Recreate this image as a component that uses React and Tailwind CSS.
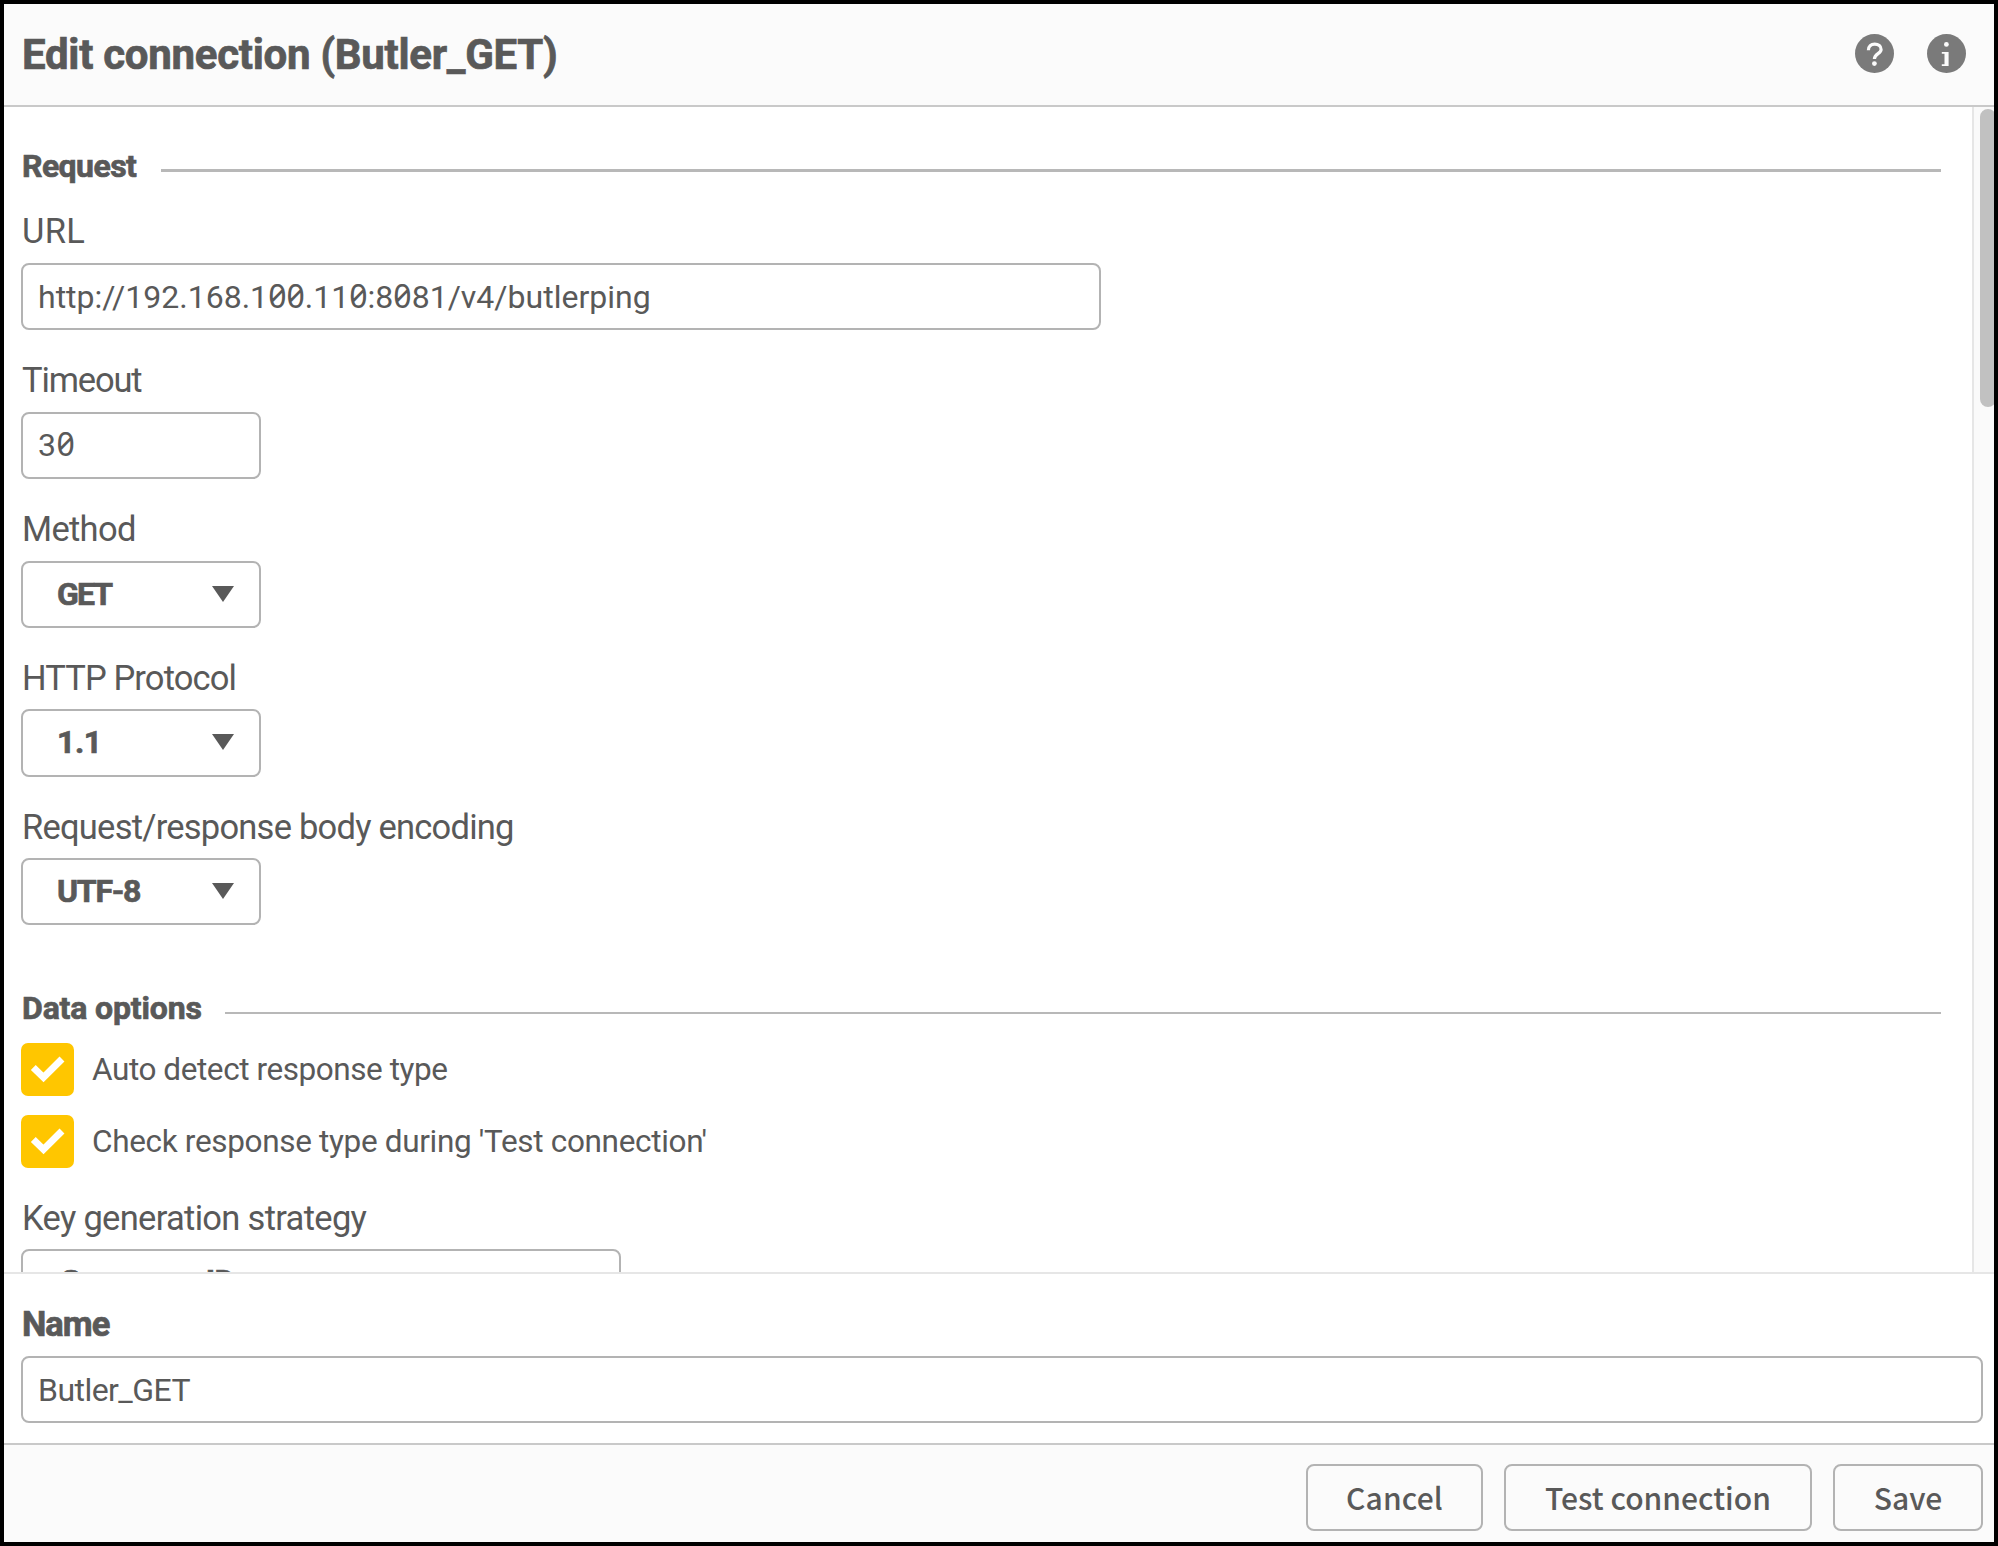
import React from "react";

const box = "box-border rounded-lg border-2 border-[#b3b3b3] bg-white";
const heavy = "font-bold [-webkit-text-stroke:0.7px_#595959]";

function SectionHeading({ children, className, textClass, ruleClass }) {
  return (
    <div className={`flex h-10 w-[1920px] items-center ${className}`}>
      <h2 className={`shrink-0 pl-px text-[32px] leading-10 whitespace-nowrap ${heavy} ${textClass}`}>{children}</h2>
      <div className={`flex-1 bg-[#b8b8b8] ${ruleClass}`} />
    </div>
  );
}

function Label({ children, className }) {
  return <label className={`block h-11 pl-px text-[34.5px] leading-[44px] whitespace-nowrap ${className}`}>{children}</label>;
}

// A zero with a slash through it, in line with the digits round it.
function Zero() {
  return <span className="font-['Noto_Sans'] slashed-zero">0</span>;
}

function TextBox({ children, className }) {
  return (
    <div className={`${box} flex h-[67px] items-center pl-[15px] text-[32px] leading-[40px] whitespace-nowrap ${className}`}>
      <span>{children}</span>
    </div>
  );
}

function Select({ children, className, textClass }) {
  return (
    <button type="button" className={`${box} flex items-center justify-between pr-[25px] pb-0.5 pl-[34px] ${className}`}>
      <span className={`text-[32px] leading-[40px] whitespace-nowrap ${heavy} ${textClass}`}>{children}</span>
      <svg className="h-4 w-[22px] shrink-0" viewBox="0 0 22 16" fill="#595959">
        <path d="M0 0H22L11 16Z" />
      </svg>
    </button>
  );
}

function Checkbox({ children, className, textClass }) {
  return (
    <div className={`flex h-[53px] items-center ${className}`}>
      <span className="flex size-[53px] shrink-0 rounded-[7px] bg-[#ffc600]">
        <svg className="size-[53px]" viewBox="0 0 53 53" fill="none" stroke="#fff" strokeWidth="7">
          <path d="M12.3 24.6L22.5 34.4L41 16" />
        </svg>
      </span>
      <span className={`ml-[18px] text-[31.5px] leading-[40px] whitespace-nowrap ${textClass}`}>{children}</span>
    </div>
  );
}

function FooterButton({ children, className }) {
  return (
    <button
      type="button"
      className={`flex h-[67px] items-center justify-center rounded-lg border-2 border-[#b3b3b3] bg-[#fbfbfb] pb-px font-['Noto_Sans_CJK_JP',sans-serif] text-[30px] leading-[40px] font-medium whitespace-nowrap ${className}`}
    >
      {children}
    </button>
  );
}

export default function App() {
  return (
    <div className="flex h-[1546px] w-[1998px] flex-col overflow-hidden border-4 border-black bg-white font-[Roboto,sans-serif] text-[#595959]">
      <header className="flex h-[103px] shrink-0 items-center justify-between border-b-2 border-[#c9c9c9] bg-[#fbfbfb] pr-7 pb-0.5 pl-[18px]">
        <h1 className={`pt-0.5 text-[42px] leading-[50px] tracking-[-0.28px] whitespace-nowrap ${heavy}`}>Edit connection (Butler_GET)</h1>
        <div className="flex gap-[33px]">
          <svg className="size-[39px]" viewBox="0 0 39 39">
            <circle cx="19.5" cy="19.5" r="19.5" fill="#7a7a7a" />
            <path
              d="M13.4 16.2C13.4 12.2 16 10.1 19.7 10.1C23.5 10.1 26.1 12.2 26.1 15.4C26.1 19.6 19.4 19.8 19.4 25"
              fill="none"
              stroke="#fbfbfb"
              strokeWidth="3.2"
            />
            <circle cx="19.4" cy="29.6" r="2.4" fill="#fbfbfb" />
          </svg>
          <svg className="size-[39px]" viewBox="0 0 39 39">
            <circle cx="19.5" cy="19.5" r="19.5" fill="#7a7a7a" />
            <circle cx="19.4" cy="10.4" r="2.4" fill="#fbfbfb" />
            <path d="M14.8 18H21.6V32H14.8V30.2H17.5V19.8H14.8Z" fill="#fbfbfb" />
          </svg>
        </div>
      </header>

      <main className="flex h-[1165px] shrink-0 overflow-hidden">
        <div className="w-[1968px] shrink-0 overflow-hidden pl-[17px]">
          <SectionHeading className="mt-[39px]" textClass="w-[140px] tracking-[-0.58px]" ruleClass="mt-[9px] h-[3px]">
            Request
          </SectionHeading>

          <Label className="mt-[23px] tracking-[0.3px]">URL</Label>
          <TextBox className="mt-2.5 w-[1080px] tracking-[0.01px]">
            http://192.168.1<Zero /><Zero />.11<Zero />:8<Zero />81/v4/butlerping
          </TextBox>

          <Label className="mt-7 tracking-[-1.15px]">Timeout</Label>
          <TextBox className="mt-2.5 w-60 pb-0.5 tracking-[0.4px]">3<Zero /></TextBox>

          <Label className="mt-7 tracking-[-0.7px]">Method</Label>
          <Select className="mt-2.5 h-[67px] w-60" textClass="tracking-[-1.9px]">GET</Select>

          <Label className="mt-7 tracking-[-0.88px]">HTTP Protocol</Label>
          <Select className="mt-[9px] h-[68px] w-60" textClass="tracking-[-0.4px]">1.1</Select>

          <Label className="mt-7 tracking-[-0.77px]">Request/response body encoding</Label>
          <Select className="mt-[9px] h-[67px] w-60" textClass="tracking-[-1.25px]">UTF-8</Select>

          <SectionHeading className="mt-[63px]" textClass="w-[204px] tracking-[-0.15px]" ruleClass="mt-[10px] h-0.5">
            Data options
          </SectionHeading>
          <Checkbox className="mt-[15px]" textClass="tracking-[-0.43px]">Auto detect response type</Checkbox>
          <Checkbox className="mt-[19px]" textClass="tracking-[-0.33px]">Check response type during 'Test connection'</Checkbox>

          <Label className="mt-7 tracking-[-0.69px]">Key generation strategy</Label>
          <Select className="mt-[9px] h-[67px] w-[600px]" textClass="-mt-0.5 pl-1 tracking-[-0.6px]">Sequence ID</Select>
        </div>
        <div className="flex flex-1 overflow-hidden border-l-2 border-[#e6e6e6] bg-[#fafafa] pt-0.5 pl-1.5">
          <div className="h-[298px] w-4 shrink-0 rounded-full bg-[#c1c1c1]" />
        </div>
      </main>

      <section className="h-[171px] shrink-0 border-t-2 border-[#e6e6e6] pt-7 pl-[17px]">
        <Label className="font-bold tracking-[-1px] [-webkit-text-stroke:0.7px_#595959]">Name</Label>
        <TextBox className="mt-2.5 w-[1962px] tracking-[-0.55px]">Butler_GET</TextBox>
      </section>

      <footer className="flex flex-1 items-start justify-end gap-[21px] border-t-2 border-[#c9c9c9] bg-[#fbfbfb] pt-[19px] pr-[11px]">
        <FooterButton className="w-[177px] tracking-[0.13px]">Cancel</FooterButton>
        <FooterButton className="w-[308px]">Test connection</FooterButton>
        <FooterButton className="w-[150px]">Save</FooterButton>
      </footer>
    </div>
  );
}
